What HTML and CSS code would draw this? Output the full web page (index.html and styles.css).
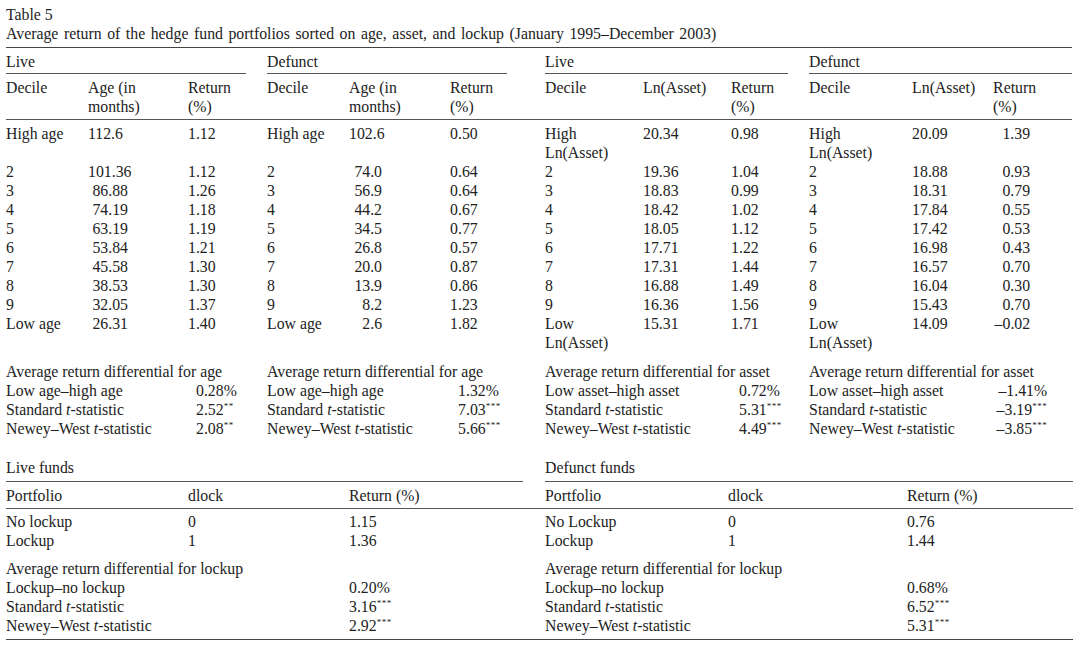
FILE: index.html
```html
<!DOCTYPE html>
<html lang="en">
<head>
    <meta charset="UTF-8">
    <title>Table 5</title>
    <link rel="stylesheet" href="styles.css">
</head>
<body>
    <div class="page">
        <div class="label">Table 5</div>
        <div class="caption">Average return of the hedge fund portfolios sorted on age, asset, and lockup (January 1995–December 2003)</div>

        <!-- deciles by age and by asset -->
        <table class="deciles">
            <colgroup>
                <col style="width:82px"><col style="width:100px"><col style="width:58px"><col style="width:21px">
                <col style="width:82px"><col style="width:101px"><col style="width:57px"><col style="width:38px">
                <col style="width:98px"><col style="width:88px"><col style="width:57px"><col style="width:21px">
                <col style="width:103px"><col style="width:81px"><col style="width:79px">
            </colgroup>
            <tr class="group">
                <th colspan="3">Live</th><td class="gap"></td>
                <th colspan="3">Defunct</th><td class="gap"></td>
                <th colspan="3">Live</th><td class="gap"></td>
                <th colspan="3">Defunct</th>
            </tr>
            <tr class="head">
                <th>Decile</th><th>Age (in<br>months)</th><th>Return<br>(%)</th><td></td>
                <th>Decile</th><th>Age (in<br>months)</th><th>Return<br>(%)</th><td></td>
                <th>Decile</th><th>Ln(Asset)</th><th>Return<br>(%)</th><td></td>
                <th>Decile</th><th>Ln(Asset)</th><th>Return<br>(%)</th>
            </tr>
            <tr class="first">
                <td>High age</td><td class="lft">112.6</td><td>1.12</td><td></td>
                <td>High age</td><td class="lft">102.6</td><td>0.50</td><td></td>
                <td>High<br>Ln(Asset)</td><td>20.34</td><td>0.98</td><td></td>
                <td>High<br>Ln(Asset)</td><td>20.09</td><td class="rgt">1.39</td>
            </tr>
            <tr>
                <td>2</td><td class="num">101.36</td><td>1.12</td><td></td>
                <td>2</td><td class="num n2">74.0</td><td>0.64</td><td></td>
                <td>2</td><td>19.36</td><td>1.04</td><td></td>
                <td>2</td><td>18.88</td><td class="rgt">0.93</td>
            </tr>
            <tr>
                <td>3</td><td class="num">86.88</td><td>1.26</td><td></td>
                <td>3</td><td class="num n2">56.9</td><td>0.64</td><td></td>
                <td>3</td><td>18.83</td><td>0.99</td><td></td>
                <td>3</td><td>18.31</td><td class="rgt">0.79</td>
            </tr>
            <tr>
                <td>4</td><td class="num">74.19</td><td>1.18</td><td></td>
                <td>4</td><td class="num n2">44.2</td><td>0.67</td><td></td>
                <td>4</td><td>18.42</td><td>1.02</td><td></td>
                <td>4</td><td>17.84</td><td class="rgt">0.55</td>
            </tr>
            <tr>
                <td>5</td><td class="num">63.19</td><td>1.19</td><td></td>
                <td>5</td><td class="num n2">34.5</td><td>0.77</td><td></td>
                <td>5</td><td>18.05</td><td>1.12</td><td></td>
                <td>5</td><td>17.42</td><td class="rgt">0.53</td>
            </tr>
            <tr>
                <td>6</td><td class="num">53.84</td><td>1.21</td><td></td>
                <td>6</td><td class="num n2">26.8</td><td>0.57</td><td></td>
                <td>6</td><td>17.71</td><td>1.22</td><td></td>
                <td>6</td><td>16.98</td><td class="rgt">0.43</td>
            </tr>
            <tr>
                <td>7</td><td class="num">45.58</td><td>1.30</td><td></td>
                <td>7</td><td class="num n2">20.0</td><td>0.87</td><td></td>
                <td>7</td><td>17.31</td><td>1.44</td><td></td>
                <td>7</td><td>16.57</td><td class="rgt">0.70</td>
            </tr>
            <tr>
                <td>8</td><td class="num">38.53</td><td>1.30</td><td></td>
                <td>8</td><td class="num n2">13.9</td><td>0.86</td><td></td>
                <td>8</td><td>16.88</td><td>1.49</td><td></td>
                <td>8</td><td>16.04</td><td class="rgt">0.30</td>
            </tr>
            <tr>
                <td>9</td><td class="num">32.05</td><td>1.37</td><td></td>
                <td>9</td><td class="num n2">8.2</td><td>1.23</td><td></td>
                <td>9</td><td>16.36</td><td>1.56</td><td></td>
                <td>9</td><td>15.43</td><td class="rgt">0.70</td>
            </tr>
            <tr>
                <td>Low age</td><td class="num">26.31</td><td>1.40</td><td></td>
                <td>Low age</td><td class="num n2">2.6</td><td>1.82</td><td></td>
                <td>Low<br>Ln(Asset)</td><td>15.31</td><td>1.71</td><td></td>
                <td>Low<br>Ln(Asset)</td><td>14.09</td><td class="rgt">–0.02</td>
            </tr>
            <tr class="diff-title">
                <td colspan="3">Average return differential for age</td><td></td>
                <td colspan="3">Average return differential for age</td><td></td>
                <td colspan="3">Average return differential for asset</td><td></td>
                <td colspan="3">Average return differential for asset</td>
            </tr>
            <tr>
                <td colspan="2">Low age–high age</td><td class="dv">0.28%</td><td></td>
                <td colspan="2">Low age–high age</td><td class="dv">1.32%</td><td></td>
                <td colspan="2">Low asset–high asset</td><td class="dv">0.72%</td><td></td>
                <td colspan="2">Low asset–high asset</td><td class="dr">–1.41%</td>
            </tr>
            <tr>
                <td colspan="2">Standard <i>t</i>-statistic</td><td class="dv">2.52<sup>**</sup></td><td></td>
                <td colspan="2">Standard <i>t</i>-statistic</td><td class="dv">7.03<sup>***</sup></td><td></td>
                <td colspan="2">Standard <i>t</i>-statistic</td><td class="dv">5.31<sup>***</sup></td><td></td>
                <td colspan="2">Standard <i>t</i>-statistic</td><td class="dr">–3.19<sup>***</sup></td>
            </tr>
            <tr>
                <td colspan="2">Newey–West <i>t</i>-statistic</td><td class="dv">2.08<sup>**</sup></td><td></td>
                <td colspan="2">Newey–West <i>t</i>-statistic</td><td class="dv">5.66<sup>***</sup></td><td></td>
                <td colspan="2">Newey–West <i>t</i>-statistic</td><td class="dv">4.49<sup>***</sup></td><td></td>
                <td colspan="2">Newey–West <i>t</i>-statistic</td><td class="dr">–3.85<sup>***</sup></td>
            </tr>
        </table>

        <!-- lockup portfolios -->
        <table class="lockup">
            <colgroup>
                <col style="width:182px"><col style="width:161px"><col style="width:174px"><col style="width:22px">
                <col style="width:183px"><col style="width:179px"><col style="width:166px">
            </colgroup>
            <tr class="group">
                <th colspan="3">Live funds</th><td class="gap"></td>
                <th colspan="3">Defunct funds</th>
            </tr>
            <tr class="head">
                <th>Portfolio</th><th>dlock</th><th>Return (%)</th><td></td>
                <th>Portfolio</th><th>dlock</th><th>Return (%)</th>
            </tr>
            <tr class="first">
                <td>No lockup</td><td>0</td><td>1.15</td><td></td>
                <td>No Lockup</td><td>0</td><td>0.76</td>
            </tr>
            <tr>
                <td>Lockup</td><td>1</td><td>1.36</td><td></td>
                <td>Lockup</td><td>1</td><td>1.44</td>
            </tr>
            <tr class="diff-title">
                <td colspan="3">Average return differential for lockup</td><td></td>
                <td colspan="3">Average return differential for lockup</td>
            </tr>
            <tr>
                <td colspan="2">Lockup–no lockup</td><td>0.20%</td><td></td>
                <td colspan="2">Lockup–no lockup</td><td>0.68%</td>
            </tr>
            <tr>
                <td colspan="2">Standard <i>t</i>-statistic</td><td>3.16<sup>***</sup></td><td></td>
                <td colspan="2">Standard <i>t</i>-statistic</td><td>6.52<sup>***</sup></td>
            </tr>
            <tr class="last">
                <td colspan="2">Newey–West <i>t</i>-statistic</td><td>2.92<sup>***</sup></td><td></td>
                <td colspan="2">Newey–West <i>t</i>-statistic</td><td>5.31<sup>***</sup></td>
            </tr>
        </table>
    </div>
</body>
</html>
```

FILE: styles.css
```css
body {
    margin: 0;
    background-color: #fff;
    color: #222;
    font-family: "Liberation Serif", "Times New Roman", serif;
    font-size: 15.8px;
    line-height: 19px;
}

.page {
    padding: 5px 0 0 6px;
    width: 1066px;
}

.label,
.caption {
    white-space: nowrap;
}

.caption {
    word-spacing: 1.6px;
}

table {
    border-collapse: collapse;
    table-layout: fixed;
    width: 1066px;
}

th,
td {
    padding: 0;
    font-weight: normal;
    text-align: left;
    vertical-align: top;
    white-space: nowrap;
    overflow: visible;
}

sup {
    font-size: 9px;
    line-height: 0;
    vertical-align: 6px;
    letter-spacing: 0.5px;
}

/* top block */
.deciles {
    margin-top: 4px;
    border-top: 1px solid #444;
}

.group th {
    padding-top: 4px;
    padding-bottom: 2px;
    border-bottom: 1px solid #555;
}

.head th,
.head td {
    padding-top: 4px;
    padding-bottom: 3px;
    border-bottom: 1px solid #555;
}

.first td {
    padding-top: 4px;
}

.num {
    text-align: right;
    padding-right: 60px;
}

.num.n2 {
    padding-right: 68px;
}

.lft {
    text-align: left;
}

.rgt {
    text-align: right;
    padding-right: 42px;
}

.diff-title td {
    padding-top: 10px;
}

.dv {
    padding-left: 8px;
}

.dr {
    text-align: right;
    padding-right: 25px;
}

/* lockup block */
.lockup {
    margin-top: 20px;
}

.lockup .group th {
    padding-top: 0;
    padding-bottom: 4px;
}

.lockup .first td {
    padding-top: 3px;
}

.lockup .diff-title td {
    padding-top: 9px;
}

.lockup .last td {
    padding-bottom: 4px;
    border-bottom: 1px solid #444;
}
```
